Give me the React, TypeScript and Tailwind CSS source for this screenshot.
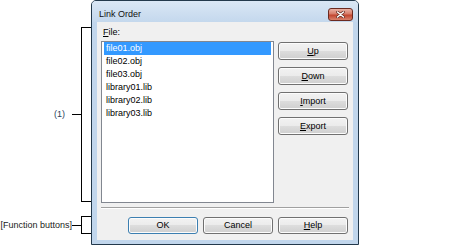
import React from "react";

const btn =
  "flex items-center justify-center w-[70px] rounded-[3px] border text-black bg-[linear-gradient(#f2f2f2_0%,#ebebeb_50%,#dddddd_50%,#cfcfcf_100%)] shadow-[inset_0_0_0_1px_#fcfcfc]";

function Btn({ children, def }: { children: React.ReactNode; def?: boolean }) {
  return (
    <div
      className={
        btn +
        (def
          ? " border-[#3c7fb1] shadow-[inset_0_0_0_1px_#c5e7f8]"
          : " border-[#707070]")
      }
    >
      {children}
    </div>
  );
}

const files = [
  "file01.obj",
  "file02.obj",
  "file03.obj",
  "library01.lib",
  "library02.lib",
  "library03.lib",
];

export default function App() {
  return (
    <div className="w-[474px] h-[247px] bg-white flex font-['Liberation_Sans',Arial,sans-serif] text-[9px] leading-[11px] text-black">
      {/* annotations */}
      <div className="w-[91px] flex flex-col pt-[27px] shrink-0">
        <div className="flex items-center justify-end h-[175px]">
          <span className="text-[#2a3f5c]">(1)</span>
          <div className="w-[9px] h-px bg-black ml-[7px]" />
          <div className="w-[10px] h-full border-y border-l border-black" />
        </div>
        <div className="flex items-center justify-end h-[18px] mt-[14px]">
          <span className="text-[#222]">[Function buttons]</span>
          <div className="w-[9px] h-px bg-black" />
          <div className="w-[10px] h-full border-y border-l border-black" />
        </div>
      </div>

      {/* window */}
      <div className="w-[268px] h-[245px] border border-[#23394c] rounded-t-[5px] bg-[#c1d6ec] flex flex-col shrink-0">
        <div className="h-[21px] flex items-start pt-[7px] pl-[7px] pr-[5px] bg-[linear-gradient(#dae7f5,#c4d8ed)] rounded-t-[4px]">
          <span className="mt-[1px] text-[#111]">Link Order</span>
          <div className="ml-auto w-[25px] h-[13px] rounded-[3px] border border-[#6b2a20] bg-[linear-gradient(#eab1a4,#d77b68_45%,#c2452f_55%,#d9826c)] flex items-center justify-center">
            <svg width="9" height="7" viewBox="0 0 9 7">
              <path d="M1.5 1 L7.5 6 M7.5 1 L1.5 6" stroke="#5a2218" strokeWidth="2.8" strokeLinecap="round" />
              <path d="M1.5 1 L7.5 6 M7.5 1 L1.5 6" stroke="#ffffff" strokeWidth="1.6" strokeLinecap="round" />
            </svg>
          </div>
        </div>

        <div className="mx-[5px] mb-[4px] flex-1 bg-[#f0f0f0] flex flex-col">
          <div className="pt-[5px] pl-[6px]">
            <span className="underline">F</span>ile:
          </div>
          <div className="flex mt-[3px] pl-[4px]">
            <div className="w-[173px] h-[162px] border border-[#828790] bg-white px-[2px]">
              {files.map((f, i) => (
                <div
                  key={f}
                  className={
                    "h-[13px] leading-[13px] pl-[2px] " +
                    (i === 0 ? "bg-[#3399ff] text-white" : "text-black")
                  }
                >
                  {f}
                </div>
              ))}
            </div>
            <div className="ml-[4px] mt-[1px] flex flex-col gap-[7px]">
              <div className="h-[18px] flex">
                <Btn>
                  <span className="underline">U</span>p
                </Btn>
              </div>
              <div className="h-[18px] flex">
                <Btn>
                  <span className="underline">D</span>own
                </Btn>
              </div>
              <div className="h-[18px] flex">
                <Btn>
                  <span className="underline">I</span>mport
                </Btn>
              </div>
              <div className="h-[18px] flex">
                <Btn>
                  <span className="underline">E</span>xport
                </Btn>
              </div>
            </div>
          </div>
          <div className="mt-[4px] ml-[4px] mr-[4px] h-[2px] border-t border-[#a0a0a0] border-b border-b-white" />
          <div className="mt-[8px] h-[17px] flex justify-end gap-[5px] pr-[5px]">
            <div className="flex"><Btn def>OK</Btn></div>
            <div className="flex"><Btn>Cancel</Btn></div>
            <div className="flex">
              <Btn>
                <span className="underline">H</span>elp
              </Btn>
            </div>
          </div>
        </div>
      </div>
    </div>
  );
}
